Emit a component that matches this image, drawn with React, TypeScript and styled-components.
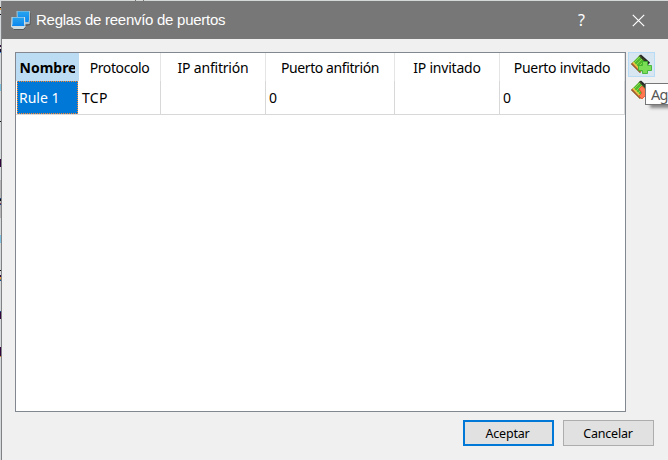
import React from "react";
import styled, { createGlobalStyle } from "styled-components";

const Global = createGlobalStyle`
  * { box-sizing: border-box; }
  body { margin: 0; overflow: hidden; background: #d5d8d9; }
`;

const Desktop = styled.div`
  width: 668px;
  height: 460px;
  padding: 1px 0 0 1px;
  overflow: hidden;
  font-family: "Noto Sans", "Open Sans", sans-serif;
  font-size: 14px;
  color: #000;
  background:
    linear-gradient(90deg, transparent 135px, #777 135px 136px, transparent 136px 143px, #777 143px 144px, transparent 144px) 0 0 / 668px 1px no-repeat,
    linear-gradient(180deg,
      #d5d8d9 7px, #111 7px 8px, #d99b50 8px 10px, #d5d8d9 10px 14px, #111 14px 15px, #d5d8d9 15px 45px,
      #30103a 45px 47px, #d5d8d9 47px 49px, #160b2e 49px 52px, #3688e0 52px 53px, #d5d8d9 53px 84px,
      #80c4e2 84px 91px, #d5d8d9 91px 121px, #111 121px 122px, #d5d8d9 122px 159px, #30063c 159px 167px,
      #d5d8d9 167px 180px, #b5b5b5 180px 198px, #174a90 198px 199px, #111 199px 201px, #b5b5b5 201px 203px,
      #8b3140 203px 204px, #174a90 204px 205px, #b5b5b5 205px 218px, #d5d8d9 218px 235px, #80c4e2 235px 243px,
      #d5d8d9 243px 270px, #111 270px 271px, #d5d8d9 271px 275px, #30063c 275px 277px, #e1a03c 277px 279px,
      #174a90 280px 281px, #d5d8d9 281px 311px, #174a90 311px 312px, #30063c 312px 319px, #d5d8d9 319px 347px,
      #30063c 347px 356px, #d88a30 356px 357px, #d5d8d9 357px) 0 0 / 1px 460px no-repeat,
    #d5d8d9;
`;

const Dialog = styled.div`
  height: 459px;
  border-left: 1px solid #808285;
  background: #f0f0f0;
  display: flex;
  flex-direction: column;
`;

const TitleBar = styled.header`
  height: 38px;
  flex: none;
  display: flex;
  align-items: center;
  padding: 0 1px 0 9px;
  background: #777;
  color: #fff;
`;

const Title = styled.h1`
  flex: 1;
  margin: 0 0 0 4px;
  font: 400 15px/20px "Liberation Sans", Arial, sans-serif;
  letter-spacing: -0.27px;
`;

const TitleButton = styled.button`
  width: 57px;
  height: 38px;
  padding: 0;
  border: 0;
  background: none;
  color: #fff;
  font: 400 16px/38px "Noto Sans", sans-serif;
  display: flex;
  align-items: center;
  justify-content: center;
`;

const Body = styled.main`
  display: flex;
  gap: 2px;
  padding: 13px 0 0 13px;
`;

const Table = styled.div`
  width: 611px;
  height: 360px;
  border: 1px solid #828790;
  background: #fff;
`;

const Row = styled.div<{ $header?: boolean }>`
  display: grid;
  grid-template-columns: 63px 82px 105px 129px 105px 125px;
  height: ${(p) => (p.$header ? 28 : 34)}px;
  border-bottom: ${(p) => (p.$header ? "0" : "1px solid #d8d8d8")};
`;

const HeaderCell = styled.div<{ $active?: boolean; $spacing: number }>`
  display: flex;
  align-items: center;
  justify-content: center;
  padding-top: 1px;
  overflow: hidden;
  white-space: nowrap;
  border-right: 1px solid ${(p) => (p.$active ? "#bcdcf4" : "#e5e5e5")};
  background: ${(p) => (p.$active ? "#bcdcf4" : "#fff")};
  font-weight: ${(p) => (p.$active ? 700 : 400)};
  letter-spacing: ${(p) => p.$spacing}px;
`;

const HeaderClip = styled.span`
  width: 55px;
  overflow: hidden;
`;

const Cell = styled.div<{ $selected?: boolean }>`
  display: flex;
  align-items: center;
  padding-left: ${(p) => (p.$selected ? 1 : 3)}px;
  margin-left: ${(p) => (p.$selected ? 1 : 0)}px;
  margin-right: ${(p) => (p.$selected ? 1 : 0)}px;
  border: ${(p) => (p.$selected ? "1px dotted #ff872a" : "0")};
  border-right: ${(p) => (p.$selected ? "1px dotted #ff872a" : "1px solid #d8d8d8")};
  background: ${(p) => (p.$selected ? "#0078d7" : "#fff")};
  color: ${(p) => (p.$selected ? "#fff" : "#000")};
  letter-spacing: ${(p) => (p.$selected ? 0 : 0.3)}px;
`;

const Tools = styled.div`
  position: relative;
  width: 40px;
`;

const ToolButton = styled.button<{ $hover?: boolean }>`
  display: flex;
  align-items: center;
  justify-content: flex-start;
  width: 27px;
  height: 25px;
  padding: 0 0 0 2px;
  margin-bottom: 1px;
  border: 1px solid ${(p) => (p.$hover ? "#b9dcf6" : "transparent")};
  background: ${(p) => (p.$hover ? "#d8e6f1" : "transparent")};
`;

const Tooltip = styled.div`
  position: absolute;
  left: 17px;
  top: 31px;
  width: 60px;
  height: 22px;
  padding-left: 5px;
  border: 1px solid #767676;
  background: #fff;
  box-shadow: 4px 4px 3px -1px #888;
  color: #575757;
  font-size: 14.5px;
  line-height: 21px;
  letter-spacing: -0.8px;
`;

const Footer = styled.footer`
  display: flex;
  justify-content: flex-end;
  gap: 9px;
  padding: 8px 14px 0 0;
`;

const PushButton = styled.button<{ $primary?: boolean }>`
  width: 91px;
  height: 26px;
  padding: ${(p) => (p.$primary ? "1px 2px 0 0" : "1px 1px 0 0")};
  border: ${(p) => (p.$primary ? "2px solid #0078d7" : "1px solid #adadad")};
  background: #e1e1e1;
  color: #000;
  font: 400 12.5px/21px "Noto Sans", sans-serif;
  letter-spacing: -0.2px;
`;

function AppIcon() {
  return (
    <svg width="21" height="21" viewBox="0 0 21 21">
      <defs>
        <linearGradient id="screen" x1="0" y1="0" x2="0" y2="1">
          <stop offset="0" stopColor="#27a4ee" />
          <stop offset="1" stopColor="#0a86f0" />
        </linearGradient>
      </defs>
      <path d="M6.5 17.5L19 14.5V3" stroke="#555" fill="none" />
      <path d="M5.5 1h13.500v9l-.5 4H6z" fill="#a8c4d2" />
      <path d="M6.5 1.500h11.500v8l-.5 2.500H7z" fill="url(#screen)" />
      <path d="M0 17l.5-10h13.500l.5 10-1.500 1-.5 1h-10l-.5-1z" fill="#cfdde3" />
      <path d="M1.500 7.500h11.500v6.500l.5 2H1l.5-2z" fill="url(#screen)" />
      <path d="M3 19.500h9.500l2-2" stroke="#454b4f" fill="none" strokeWidth=".7" />
    </svg>
  );
}

function RuleIcon({ remove = false }: { remove?: boolean }) {
  return (
    <svg width="22" height="22" viewBox="0 0 22 22">
      <path d="M0 10L9 1l9 8-9 10z" fill="#54b82f" />
      <path d="M2 10l8-8M4 12l8-8M6 14l8-8M8 16l7-8" stroke="#8de052" strokeWidth=".9" />
      <path d="M0 10l1.500-1.500 8.500 9L9 19z" fill="#a85132" />
      <path d="M1.300 9l1.200-1.200 8 8.500-1.200 1.200z" fill="#eac443" />
      <path d="M8 2l2-1.500 9 8-2 2.500z" fill="#242826" />
      <path d="M7.500 2.500l1-1 9 8-1 1" fill="none" stroke="#8c7931" strokeWidth=".7" strokeDasharray="1 1" />
      {remove ? (
        <path d="M8 9l3-3 3 3 3-3 3 3-3 3 3 3-3 3-3-2-3 3-3-3 3-3z" fill="#ff7950" stroke="#e3502b" strokeWidth=".8" />
      ) : (
        <path d="M11.500 7.500h5v4h4v5h-4v3h-5v-3h-4v-5h4z" fill="#7bdd56" stroke="#35ad2c" strokeWidth=".8" strokeLinejoin="round" />
      )}
    </svg>
  );
}

const columns = [
  { name: "Protocolo", spacing: -0.4 },
  { name: "IP anfitrión", spacing: -0.2 },
  { name: "Puerto anfitrión", spacing: -0.4 },
  { name: "IP invitado", spacing: -0.2 },
  { name: "Puerto invitado", spacing: -0.3 },
];

export default function App() {
  return (
    <Desktop>
      <Global />
      <Dialog>
        <TitleBar>
          <AppIcon />
          <Title>Reglas de reenvío de puertos</Title>
          <TitleButton>?</TitleButton>
          <TitleButton aria-label="Cerrar">
            <svg width="13" height="13" viewBox="0 0 13 13">
              <path d="M.8 .8l11.4 11.4M12.2 .8L.8 12.2" stroke="#fff" strokeWidth="1.2" />
            </svg>
          </TitleButton>
        </TitleBar>
        <Body>
          <Table>
            <Row $header>
              <HeaderCell $active $spacing={0}><HeaderClip>Nombre</HeaderClip></HeaderCell>
              {columns.map((c) => (
                <HeaderCell key={c.name} $spacing={c.spacing}><span>{c.name}</span></HeaderCell>
              ))}
            </Row>
            <Row>
              <Cell $selected>Rule 1</Cell>
              <Cell>TCP</Cell>
              <Cell />
              <Cell>0</Cell>
              <Cell />
              <Cell>0</Cell>
            </Row>
          </Table>
          <Tools>
            <ToolButton $hover><RuleIcon /></ToolButton>
            <ToolButton><RuleIcon remove /></ToolButton>
            <Tooltip>Ag</Tooltip>
          </Tools>
        </Body>
        <Footer>
          <PushButton $primary>Aceptar</PushButton>
          <PushButton>Cancelar</PushButton>
        </Footer>
      </Dialog>
    </Desktop>
  );
}
